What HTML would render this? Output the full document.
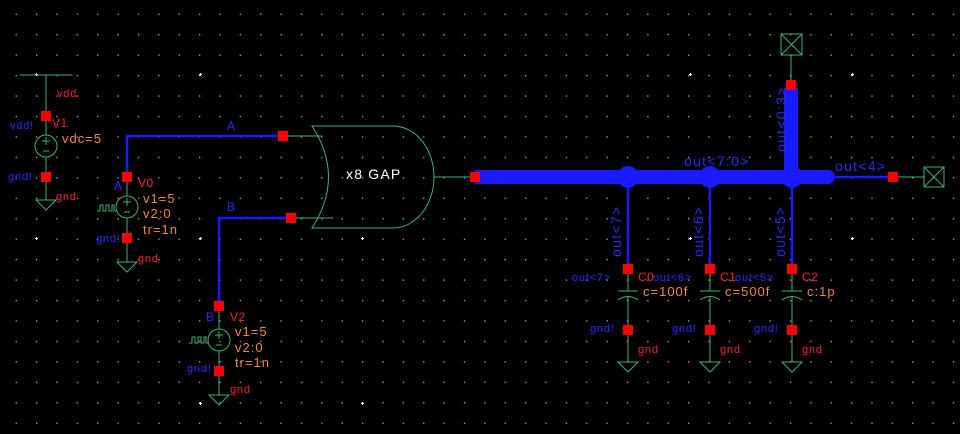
<!DOCTYPE html>
<html><head><meta charset="utf-8"><style>
html,body{margin:0;padding:0;background:#000;width:960px;height:434px;overflow:hidden}
svg{display:block}
text{font-family:"Liberation Sans",sans-serif;font-size:12px;letter-spacing:0.5px}
.b{fill:#2a2aff}.r{fill:#ff2020}.o{fill:#f08840;font-size:13px;letter-spacing:1px}
.s{font-size:11px;letter-spacing:0.8px}
.L{font-size:14px;letter-spacing:1.3px}
</style></head><body>
<svg width="960" height="434" viewBox="0 0 960 434" xmlns="http://www.w3.org/2000/svg">
<defs>
<pattern id="g" x="15.6" y="13.6" width="20.375" height="20.45" patternUnits="userSpaceOnUse">
<rect x="0" y="0" width="1.3" height="1.3" fill="#b0b0b0"/>
</pattern>
</defs>
<rect width="960" height="434" fill="#000"/>
<rect width="960" height="434" fill="url(#g)"/>
<g fill="#fff">
<rect x="35" y="74" width="3" height="1"/><rect x="36" y="73" width="1" height="3"/>
<rect x="199" y="74" width="3" height="1"/><rect x="200" y="73" width="1" height="3"/>
<rect x="689" y="74" width="3" height="1"/><rect x="690" y="73" width="1" height="3"/>
<rect x="851" y="74" width="3" height="1"/><rect x="852" y="73" width="1" height="3"/>
<rect x="35" y="238" width="3" height="1"/><rect x="36" y="237" width="1" height="3"/>
<rect x="199" y="238" width="3" height="1"/><rect x="200" y="237" width="1" height="3"/>
<rect x="361" y="238" width="3" height="1"/><rect x="362" y="237" width="1" height="3"/>
<rect x="689" y="238" width="3" height="1"/><rect x="690" y="237" width="1" height="3"/>
<rect x="851" y="238" width="3" height="1"/><rect x="852" y="237" width="1" height="3"/>
<rect x="199" y="403" width="3" height="1"/><rect x="200" y="402" width="1" height="3"/>
<rect x="361" y="403" width="3" height="1"/><rect x="362" y="402" width="1" height="3"/>
</g>

<g stroke="#3cb371" fill="none" stroke-width="1">
<path d="M20 75H72M46 75V135M46 157V200M36 200H56L46 210Z"/>
<circle cx="46" cy="146" r="11"/>
<path d="M42 141H50M46 137V145M43 151H49"/>
<path d="M127 177V196M127 218V262M117 262H137L127 272Z"/>
<circle cx="127" cy="207" r="11"/>
<path d="M123 202H131M127 198V206M124 212H130"/>
<path d="M97 211H100V205H103V211H106V205H109V211H112V205H114V211H116"/>
<path d="M219 306V329M219 351V395M209 395H229L219 405Z"/>
<circle cx="219" cy="340" r="11"/>
<path d="M215 335H223M219 331V339M216 345H222"/>
<path d="M189 343H192V337H195V343H198V337H201V343H204V337H206V343H208"/>
<path d="M283 136H322M291 218H333M434 177H475"/>
<path d="M312 126H393A41 51 0 0 1 393 228H312Q345 177 312 126Z"/>
<path d="M791 55V85M893 177H925"/>
<rect x="781" y="34" width="21" height="21"/><path d="M781 34L802 55M802 34L781 55"/>
<rect x="924" y="167" width="20" height="20"/><path d="M924 167L944 187M944 167L924 187"/>
<path d="M628 269V291M618 291H638M618 300Q628 293 638 300M628 296V362M618 362H638L628 372Z"/>
<path d="M710 269V291M700 291H720M700 300Q710 293 720 300M710 296V362M700 362H720L710 372Z"/>
<path d="M792 269V291M782 291H802M782 300Q792 293 802 300M792 296V362M782 362H802L792 372Z"/>
</g>

<g stroke="#1a1aff" fill="none">
<path d="M127 177V136H283" stroke-width="2.5"/>
<path d="M219 306V218H291" stroke-width="2.5"/>
<path d="M475 177H828" stroke-width="14"/>
<path d="M791 88V177" stroke-width="14"/>
<path d="M835 177H893" stroke-width="2.5"/>
<path d="M628 177V269M710 177V269M792 177V269" stroke-width="2.5"/>
</g>
<g fill="#1a1aff">
<circle cx="828" cy="177" r="7"/>
<circle cx="628" cy="177" r="11"/><circle cx="710" cy="177" r="11"/><circle cx="792" cy="177" r="11"/>
</g>

<g fill="#ff0000">
<rect x="41" y="111" width="10" height="10"/><rect x="41" y="172" width="10" height="10"/>
<rect x="122" y="172" width="10" height="10"/><rect x="122" y="233" width="10" height="10"/>
<rect x="278" y="131" width="10" height="10"/><rect x="286" y="213" width="10" height="10"/>
<rect x="214" y="301" width="10" height="10"/><rect x="214" y="366" width="10" height="10"/>
<rect x="470" y="172" width="10" height="10"/>
<rect x="786" y="80" width="10" height="10"/><rect x="888" y="172" width="10" height="10"/>
<rect x="623" y="264" width="10" height="10"/><rect x="623" y="325" width="10" height="10"/>
<rect x="705" y="264" width="10" height="10"/><rect x="705" y="325" width="10" height="10"/>
<rect x="787" y="264" width="10" height="10"/><rect x="787" y="325" width="10" height="10"/>
</g>

<text x="57" y="97" class="r s">vdd</text>
<text x="52" y="127" class="r">V1</text>
<text x="10" y="129" class="b s">vdd!</text>
<text x="62" y="143" class="o">vdc=5</text>
<text x="8" y="180" class="b s">gnd!</text>
<text x="56" y="200" class="r s">gnd</text>

<text x="227" y="130" class="b">A</text>
<text x="114" y="190" class="b">A</text>
<text x="138" y="187" class="r">V0</text>
<text x="143" y="203" class="o">v1=5</text>
<text x="143" y="218" class="o">v2:0</text>
<text x="143" y="234" class="o">tr=1n</text>
<text x="96" y="242" class="b s">gnd!</text>
<text x="138" y="262" class="r s">gnd</text>

<text x="227" y="211" class="b">B</text>
<text x="206" y="321" class="b">B</text>
<text x="230" y="321" class="r">V2</text>
<text x="235" y="336" class="o">v1=5</text>
<text x="235" y="352" class="o">v2:0</text>
<text x="235" y="367" class="o">tr=1n</text>
<text x="187" y="372" class="b s">gnd!</text>
<text x="230" y="393" class="r s">gnd</text>

<text x="346" y="179" fill="#fff" style="font-size:14px;letter-spacing:1.2px">x8 GAP</text>

<text x="684" y="166" class="b L">out&lt;7:0&gt;</text>
<text x="835" y="171" class="b L">out&lt;4&gt;</text>
<text transform="translate(786,152) rotate(-90)" class="b L">out&lt;0:3&gt;</text>
<text transform="translate(621,257) rotate(-90)" class="b L">out&lt;7&gt;</text>
<text transform="translate(703,257) rotate(-90)" class="b L">out&lt;6&gt;</text>
<text transform="translate(785,257) rotate(-90)" class="b L">out&lt;5&gt;</text>

<text x="572" y="281" class="b s">out&lt;7&gt;</text>
<text x="638" y="281" class="r">C0</text>
<text x="653" y="281" class="b s">out&lt;6&gt;</text>
<text x="720" y="281" class="r">C1</text>
<text x="735" y="281" class="b s">out&lt;5&gt;</text>
<text x="802" y="281" class="r">C2</text>
<text x="643" y="296" class="o">c=100f</text>
<text x="725" y="296" class="o">c=500f</text>
<text x="807" y="296" class="o">c:1p</text>
<text x="590" y="332" class="b s">gnd!</text>
<text x="672" y="332" class="b s">gnd!</text>
<text x="754" y="332" class="b s">gnd!</text>
<text x="638" y="353" class="r s">gnd</text>
<text x="720" y="353" class="r s">gnd</text>
<text x="802" y="353" class="r s">gnd</text>
</svg>
</body></html>
